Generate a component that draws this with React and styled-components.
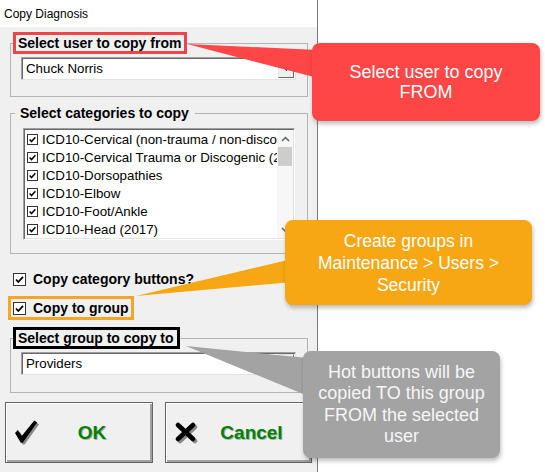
import React from "react";
import styled, { createGlobalStyle } from "styled-components";

const Global = createGlobalStyle`
  html, body { margin: 0; padding: 0; background: #fff; }
  body { font-family: "Liberation Sans", Arial, sans-serif; }
`;

const Page = styled.div`
  position: relative;
  width: 545px;
  height: 472px;
  background: #fff;
  overflow: hidden;
`;

const Dialog = styled.div`
  width: 318px;
  height: 472px;
  box-sizing: border-box;
  background: #f0f0f0;
  border-right: 1px solid #7a7a7a;
  display: flex;
  flex-direction: column;
`;

const TitleBar = styled.div`
  height: 27px;
  flex: none;
  background: #fff;
  display: flex;
  align-items: center;
  padding-left: 4px;
  font-size: 12px;
  color: #000;
`;

const Body = styled.div`
  display: flex;
  flex-direction: column;
  padding: 5px 5px 0 5px;
`;

const Group = styled.fieldset`
  margin: ${(p) => p.$mt}px 4px 0 5px;
  padding: 0;
  border: 1px solid #b4b4b4;
  min-width: 0;
`;

const Legend = styled.legend`
  margin-left: ${(p) => p.$ml}px;
  padding: 0 3px 0 2px;
  border: 3px solid ${(p) => p.$hl || "transparent"};
  font-weight: bold;
  font-size: 14px;
  line-height: 16px;
  color: #000;
  background: #f0f0f0;
`;

const GroupInner = styled.div`
  padding: ${(p) => p.$pad};
`;

const Combo = styled.div`
  height: 23px;
  box-sizing: border-box;
  background: #fff;
  border: 1px solid;
  border-color: #a0a0a0 #e3e3e3 #e3e3e3 #a0a0a0;
  box-shadow: inset 1px 1px 0 #696969;
  display: flex;
  align-items: center;
  font-size: 13.3px;
  color: #000;
`;

const ComboText = styled.span`
  flex: 1;
  padding-left: 4px;
`;

const ComboButton = styled.div`
  width: 16px;
  height: 19px;
  margin-right: 1px;
  box-sizing: border-box;
  background: #f0f0f0;
  border: 1px solid;
  border-color: #e3e3e3 #696969 #696969 #e3e3e3;
  display: flex;
  align-items: center;
  justify-content: center;
`;

const ListBox = styled.div`
  position: relative;
  height: 112px;
  box-sizing: border-box;
  background: #fff;
  border: 1px solid;
  border-color: #a0a0a0 #fff #fff #a0a0a0;
  box-shadow: inset 1px 1px 0 #696969, inset -1px -1px 0 #e3e3e3;
  padding: 1px 1px 1px 1px;
  display: flex;
`;

const ListItems = styled.div`
  flex: 1;
  min-width: 0;
  overflow: hidden;
`;

const ListItem = styled.div`
  height: 18px;
  display: flex;
  align-items: center;
  padding-left: 2px;
  gap: 4px;
  font-size: 13.3px;
  white-space: nowrap;
  color: #000;
`;

const ScrollBar = styled.div`
  width: 16px;
  flex: none;
  background: #f7f7f7;
  display: flex;
  flex-direction: column;
  align-items: stretch;
`;

const ScrollArrow = styled.div`
  height: 17px;
  display: flex;
  align-items: center;
  justify-content: center;
`;

const ScrollThumb = styled.div`
  height: 19px;
  margin: 0 1px;
  background: #cdcdcd;
`;

const ScrollTrack = styled.div`
  flex: 1;
`;

const Box = styled.span`
  width: ${(p) => p.$size}px;
  height: ${(p) => p.$size}px;
  flex: none;
  box-sizing: border-box;
  background: #fff;
  border: 1px solid #333;
  display: flex;
  align-items: center;
  justify-content: center;
`;

const CheckRow = styled.div`
  align-self: flex-start;
  display: flex;
  align-items: center;
  gap: 7px;
  height: 18px;
  margin: ${(p) => p.$mt}px 0 0 3px;
  padding: 0 2px 0 2px;
  border: 3px solid ${(p) => p.$hl || "transparent"};
  font-weight: bold;
  font-size: 14px;
  color: #000;
`;

const Buttons = styled.div`
  display: grid;
  grid-template-columns: 148px 147px;
  gap: 12px;
  margin-top: 9px;
`;

const Button = styled.div`
  height: 61px;
  box-sizing: border-box;
  background: #f0f0f0;
  border: 1px solid #646464;
  box-shadow: inset 1px 1px 0 #fff, inset -2px -2px 0 #a0a0a0;
  display: flex;
  align-items: center;
  padding: 0 9px;
`;

const ButtonIcon = styled.div`
  width: 26px;
  flex: none;
  display: flex;
  align-items: center;
`;

const ButtonLabel = styled.span`
  flex: 1;
  text-align: center;
  color: #008000;
  font-weight: bold;
  font-size: 19px;
  text-shadow: 1px 1px 0 #b0b0b0;
`;

const Overlay = styled.svg`
  position: absolute;
  left: 0;
  top: 0;
  pointer-events: none;
`;

const Callout = styled.div`
  position: absolute;
  left: ${(p) => p.$x}px;
  top: ${(p) => p.$y}px;
  width: ${(p) => p.$w}px;
  height: ${(p) => p.$h}px;
  background: ${(p) => p.$bg};
  border-radius: 8px;
  box-shadow: 1px 3px 4px rgba(0, 0, 0, 0.25);
  display: flex;
  align-items: center;
  justify-content: center;
  text-align: center;
  color: ${(p) => p.$fg || "#fff"};
  font-size: ${(p) => p.$fs}px;
  line-height: ${(p) => p.$lh}px;
  font-family: "Liberation Sans", Arial, sans-serif;
`;

const Check = ({ size }) => (
  <svg width={size - 2} height={size - 2} viewBox="0 0 11 11">
    <polyline points="2,5.5 4.3,8 9,2.8" fill="none" stroke="#000" strokeWidth="1.8" />
  </svg>
);

const items = [
  "ICD10-Cervical (non-trauma / non-discogenic) (2017)",
  "ICD10-Cervical Trauma or Discogenic (2017)",
  "ICD10-Dorsopathies",
  "ICD10-Elbow",
  "ICD10-Foot/Ankle",
  "ICD10-Head (2017)",
];

const DropArrow = () => (
  <svg width="7" height="4" viewBox="0 0 7 4">
    <polygon points="0,0 7,0 3.5,4" fill="#000" />
  </svg>
);

const OkIcon = () => (
  <svg width="27" height="28" viewBox="0 0 27 28">
    <polygon points="2,16 5,13 9,19 22,3 25,5 10,26 8,26" fill="#8a8a8a" />
    <polygon points="0,14 3,11 7,17 20,1 23,3 8,24 6,24" fill="#000" />
  </svg>
);

const CancelIcon = () => (
  <svg width="24" height="22" viewBox="0 0 24 22">
    <g stroke="#8a8a8a" strokeWidth="4.5" strokeLinecap="round">
      <line x1="5" y1="5" x2="20" y2="19" />
      <line x1="20" y1="5" x2="5" y2="19" />
    </g>
    <g stroke="#000" strokeWidth="4.5" strokeLinecap="round">
      <line x1="3" y1="3" x2="18" y2="17" />
      <line x1="18" y1="3" x2="3" y2="17" />
    </g>
  </svg>
);

export default function App() {
  return (
    <Page>
      <Global />
      <Dialog>
        <TitleBar>Copy Diagnosis</TitleBar>
        <Body>
          <Group $mt={0}>
            <Legend $ml={2} $hl="#f0434a">Select user to copy from</Legend>
            <GroupInner $pad="3px 11px 16px 10px">
              <Combo>
                <ComboText>Chuck Norris</ComboText>
                <ComboButton>
                  <DropArrow />
                </ComboButton>
              </Combo>
            </GroupInner>
          </Group>

          <Group $mt={5}>
            <Legend $ml={4}>Select categories to copy</Legend>
            <GroupInner $pad="4px 12px 13px 12px">
              <ListBox>
                <ListItems>
                  {items.map((t) => (
                    <ListItem key={t}>
                      <Box $size={11}>
                        <Check size={11} />
                      </Box>
                      {t}
                    </ListItem>
                  ))}
                </ListItems>
                <ScrollBar>
                  <ScrollArrow>
                    <svg width="9" height="6" viewBox="0 0 9 6">
                      <polyline points="1,5 4.5,1.5 8,5" fill="none" stroke="#606060" strokeWidth="1.5" />
                    </svg>
                  </ScrollArrow>
                  <ScrollThumb />
                  <ScrollTrack />
                  <ScrollArrow>
                    <svg width="9" height="6" viewBox="0 0 9 6">
                      <polyline points="1,1 4.5,4.5 8,1" fill="none" stroke="#606060" strokeWidth="1.5" />
                    </svg>
                  </ScrollArrow>
                </ScrollBar>
              </ListBox>
            </GroupInner>
          </Group>

          <CheckRow $mt={13}>
            <Box $size={13}>
              <Check size={13} />
            </Box>
            Copy category buttons?
          </CheckRow>
          <CheckRow $mt={5} $hl="#f5a623">
            <Box $size={13}>
              <Check size={13} />
            </Box>
            Copy to group
          </CheckRow>

          <Group $mt={7}>
            <Legend $ml={2} $hl="#000">Select group to copy to</Legend>
            <GroupInner $pad="3px 11px 17px 10px">
              <Combo>
                <ComboText>Providers</ComboText>
                <ComboButton>
                  <DropArrow />
                </ComboButton>
              </Combo>
            </GroupInner>
          </Group>

          <Buttons>
            <Button>
              <ButtonIcon>
                <OkIcon />
              </ButtonIcon>
              <ButtonLabel>OK</ButtonLabel>
            </Button>
            <Button>
              <ButtonIcon>
                <CancelIcon />
              </ButtonIcon>
              <ButtonLabel>Cancel</ButtonLabel>
            </Button>
          </Buttons>
        </Body>
      </Dialog>

      <Overlay width="545" height="472" viewBox="0 0 545 472">
        <polygon points="187,44 318,50 318,78" fill="#fe4646" />
        <polygon points="136,296 292,259 292,282" fill="#f6a713" />
        <polygon points="186,346 308,358 308,396" fill="#a3a3a3" />
      </Overlay>

      <Callout $x={312} $y={43} $w={228} $h={78} $bg="#fe4646" $fs={18} $lh={20}>
        Select user to copy
        <br />
        FROM
      </Callout>
      <Callout $x={285} $y={220} $w={247} $h={85} $bg="#f6a713" $fs={17.5} $lh={22}>
        Create groups in
        <br />
        Maintenance &gt; Users &gt;
        <br />
        Security
      </Callout>
      <Callout $x={303} $y={351} $w={197} $h={107} $bg="#a3a3a3" $fg="#f6f6f6" $fs={18} $lh={21.5}>
        Hot buttons will be
        <br />
        copied TO this group
        <br />
        FROM the selected
        <br />
        user
      </Callout>
    </Page>
  );
}
